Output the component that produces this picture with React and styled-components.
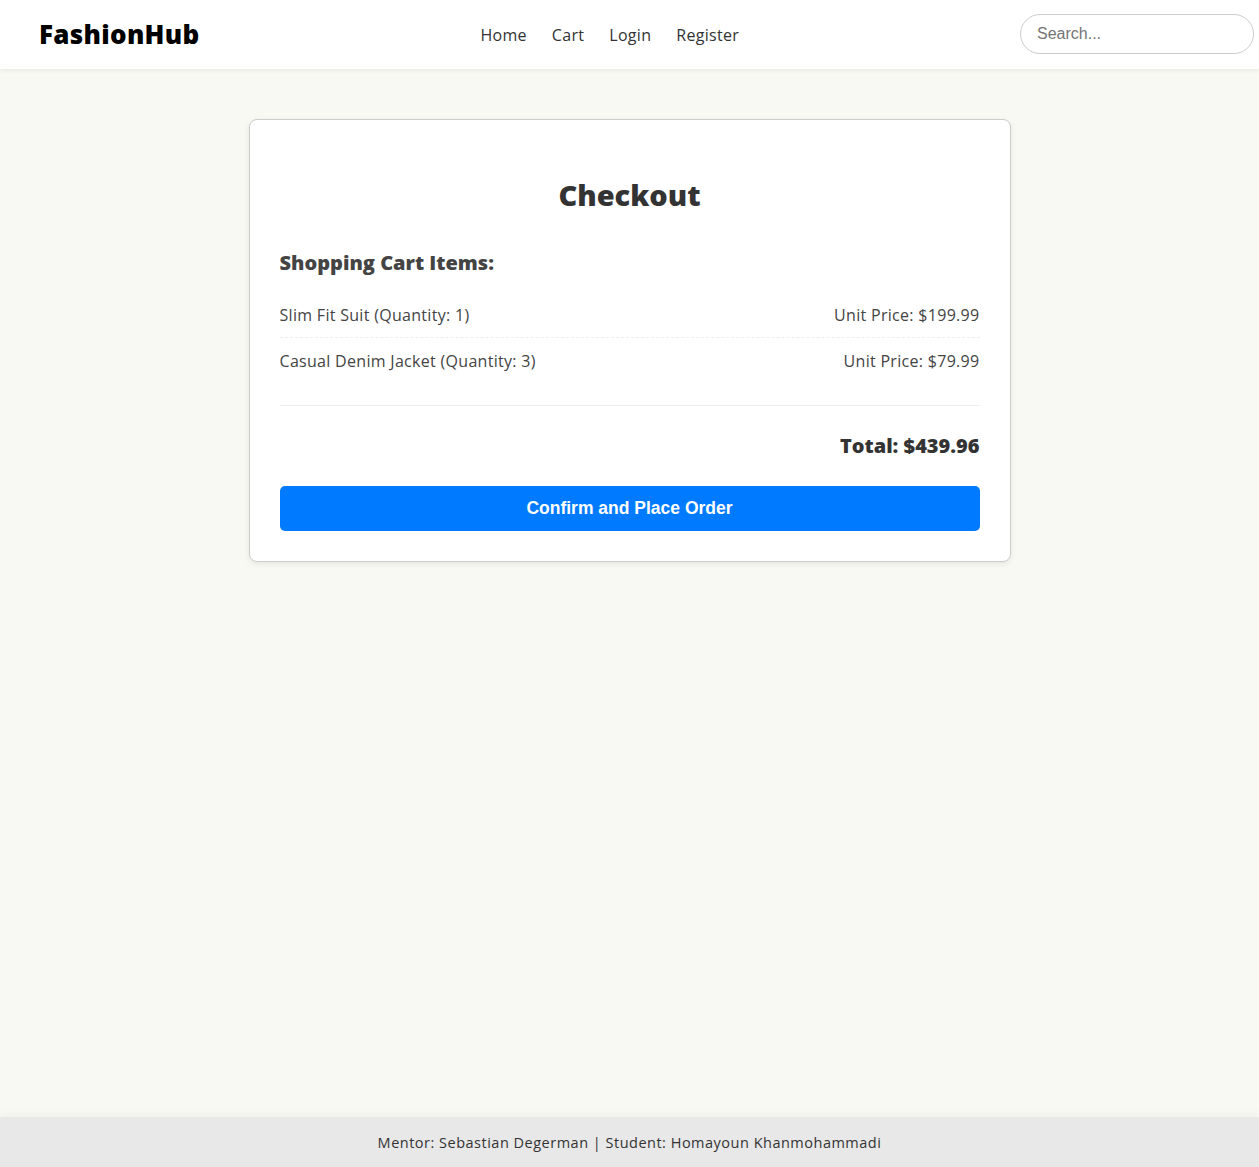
import React from 'react'
import styled, { createGlobalStyle } from 'styled-components'

const GlobalStyle = createGlobalStyle`
  * { box-sizing: border-box; }
  body {
    margin: 0;
    background-color: #f9f9f4;
    font-family: "Open Sans", "Noto Sans", Arial, sans-serif;
    color: #333;
  }
`

const Page = styled.div`
  min-height: 100vh;
  display: flex;
  flex-direction: column;
`

const Header = styled.header`
  height: 69px;
  background-color: #fff;
  box-shadow: 0 2px 4px rgba(0, 0, 0, 0.06);
  display: flex;
  justify-content: space-between;
  align-items: center;
  padding: 0 5px 0 39px;
`

const Logo = styled.div`
  font-weight: 800;
  font-size: 26px;
  color: #000;
  letter-spacing: 0.3px;
  margin-top: -2px;
`

const Nav = styled.nav`
  display: flex;
  gap: 25px;
`

const NavLink = styled.a`
  font-size: 16px;
  color: #333;
  text-decoration: none;
  letter-spacing: 0.3px;
`

const SearchBox = styled.input`
  width: 234px;
  height: 40px;
  border: 1px solid #ccc;
  border-radius: 20px;
  padding: 0 16px;
  font-family: "Liberation Sans", Arial, sans-serif;
  font-size: 16px;
  color: #333;
  outline: none;
  margin-top: -2px;
  &::placeholder { color: #757575; }
`

const Main = styled.main`
  flex: 1;
  display: flex;
  justify-content: center;
  align-items: flex-start;
  padding-top: 50px;
`

const Card = styled.section`
  width: 762px;
  background-color: #fff;
  border: 1px solid #ccc;
  border-radius: 8px;
  box-shadow: 0 2px 6px rgba(0, 0, 0, 0.08);
  padding: 55px 30px 30px;
`

const Title = styled.h2`
  margin: 0 0 35px;
  text-align: center;
  font-size: 29px;
  font-weight: 800;
  color: #333;
`

const SectionTitle = styled.h3`
  margin: 0 0 16px;
  font-size: 20px;
  font-weight: 800;
  color: #444;
`

const ItemList = styled.ul`
  list-style: none;
  margin: 0;
  padding: 0 0 21px;
  border-bottom: 1px solid #eee;
`

const Item = styled.li`
  display: flex;
  justify-content: space-between;
  align-items: center;
  height: 46px;
  font-size: 16px;
  letter-spacing: 0.3px;
  color: #444;
  border-bottom: ${p => (p.$last ? 'none' : '1px dashed #eee')};
`

const Total = styled.div`
  text-align: right;
  font-size: 20px;
  font-weight: 800;
  color: #333;
  margin: 26px 0 27px;
`

const OrderButton = styled.button`
  display: block;
  width: 100%;
  height: 45px;
  border: none;
  border-radius: 5px;
  background-color: #007bff;
  color: #fff;
  font-family: "Liberation Sans", Arial, sans-serif;
  font-weight: 700;
  font-size: 17.5px;
  cursor: pointer;
`

const Footer = styled.footer`
  height: 50px;
  background-color: #e8e8e8;
  box-shadow: 0 -4px 8px rgba(0, 0, 0, 0.03);
  display: flex;
  align-items: center;
  justify-content: center;
  font-size: 14.5px;
  letter-spacing: 0.5px;
  color: #333;
`

const items = [
  { name: 'Slim Fit Suit', qty: 1, price: 199.99 },
  { name: 'Casual Denim Jacket', qty: 3, price: 79.99 }
]

export default function App() {
  const total = items.reduce((sum, i) => sum + i.qty * i.price, 0)
  return (
    <Page>
      <GlobalStyle />
      <Header>
        <Logo>FashionHub</Logo>
        <Nav>
          <NavLink href="#">Home</NavLink>
          <NavLink href="#">Cart</NavLink>
          <NavLink href="#">Login</NavLink>
          <NavLink href="#">Register</NavLink>
        </Nav>
        <SearchBox placeholder="Search..." />
      </Header>
      <Main>
        <Card>
          <Title>Checkout</Title>
          <SectionTitle>Shopping Cart Items:</SectionTitle>
          <ItemList>
            {items.map((item, idx) => (
              <Item key={item.name} $last={idx === items.length - 1}>
                <span>{item.name} (Quantity: {item.qty})</span>
                <span>Unit Price: ${item.price.toFixed(2)}</span>
              </Item>
            ))}
          </ItemList>
          <Total>Total: ${total.toFixed(2)}</Total>
          <OrderButton>Confirm and Place Order</OrderButton>
        </Card>
      </Main>
      <Footer>Mentor: Sebastian Degerman | Student: Homayoun Khanmohammadi</Footer>
    </Page>
  )
}
